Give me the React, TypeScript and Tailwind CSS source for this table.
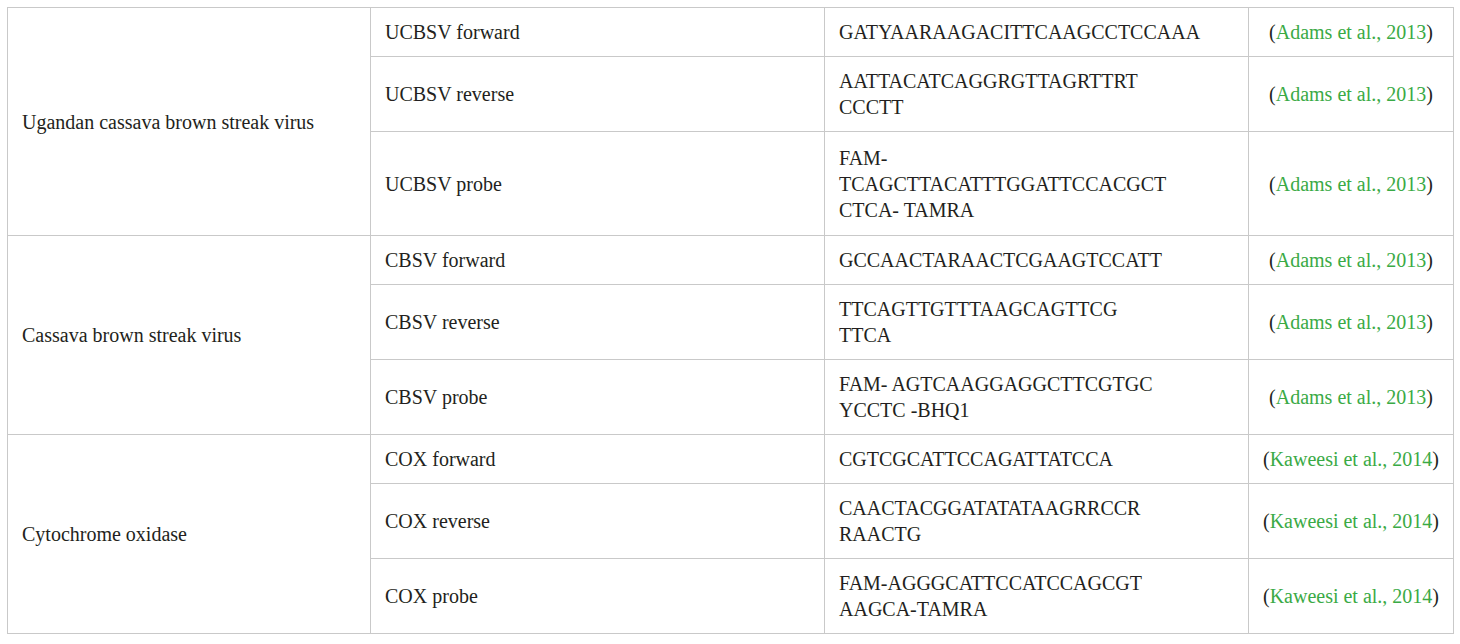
import React from 'react'

type Primer = {
  name: string
  seq: string[]
  ref: string
  year: string
}

type Group = {
  target: string
  primers: Primer[]
}

const groups: Group[] = [
  {
    target: 'Ugandan cassava brown streak virus',
    primers: [
      { name: 'UCBSV forward', seq: ['GATYAARAAGACITTCAAGCCTCCAAA'], ref: 'Adams et al.,', year: '2013' },
      { name: 'UCBSV reverse', seq: ['AATTACATCAGGRGTTAGRTTRT', 'CCCTT'], ref: 'Adams et al.,', year: '2013' },
      { name: 'UCBSV probe', seq: ['FAM-', 'TCAGCTTACATTTGGATTCCACGCT', 'CTCA- TAMRA'], ref: 'Adams et al.,', year: '2013' },
    ],
  },
  {
    target: 'Cassava brown streak virus',
    primers: [
      { name: 'CBSV forward', seq: ['GCCAACTARAACTCGAAGTCCATT'], ref: 'Adams et al.,', year: '2013' },
      { name: 'CBSV reverse', seq: ['TTCAGTTGTTTAAGCAGTTCG', 'TTCA'], ref: 'Adams et al.,', year: '2013' },
      { name: 'CBSV probe', seq: ['FAM- AGTCAAGGAGGCTTCGTGC', 'YCCTC -BHQ1'], ref: 'Adams et al.,', year: '2013' },
    ],
  },
  {
    target: 'Cytochrome oxidase',
    primers: [
      { name: 'COX forward', seq: ['CGTCGCATTCCAGATTATCCA'], ref: 'Kaweesi et al.,', year: '2014' },
      { name: 'COX reverse', seq: ['CAACTACGGATATATAAGRRCCR', 'RAACTG'], ref: 'Kaweesi et al.,', year: '2014' },
      { name: 'COX probe', seq: ['FAM-AGGGCATTCCATCCAGCGT', 'AAGCA-TAMRA'], ref: 'Kaweesi et al.,', year: '2014' },
    ],
  },
]

const cell = 'border border-[#c9c9c9] py-[11px] align-middle'

export default function App() {
  return (
    <div className="min-h-screen w-full bg-white pt-[7px] pl-[7px] font-['Liberation_Serif',serif] text-[20px] leading-[26px] text-[#231f20]">
      <table className="w-[1446px] table-fixed border-collapse">
        <colgroup>
          <col className="w-[363px]" />
          <col className="w-[454px]" />
          <col className="w-[424px]" />
          <col className="w-[205px]" />
        </colgroup>
        <tbody>
          {groups.map((g) =>
            g.primers.map((p, i) => (
              <tr key={p.name} className={p.seq.length > 2 ? 'h-[104px]' : ''}>
                {i === 0 && (
                  <td rowSpan={g.primers.length} className={`${cell} px-[14px]`}>
                    {g.target}
                  </td>
                )}
                <td className={`${cell} px-[14px]`}>{p.name}</td>
                <td className={`${cell} px-[14px]`}>
                  {p.seq.map((line, k) => (
                    <div key={k}>{line}</div>
                  ))}
                </td>
                <td className={`${cell} px-[4px] text-center whitespace-nowrap`}>
                  (<span className="text-[#3aaa45]">{p.ref} {p.year}</span>)
                </td>
              </tr>
            ))
          )}
        </tbody>
      </table>
    </div>
  )
}
